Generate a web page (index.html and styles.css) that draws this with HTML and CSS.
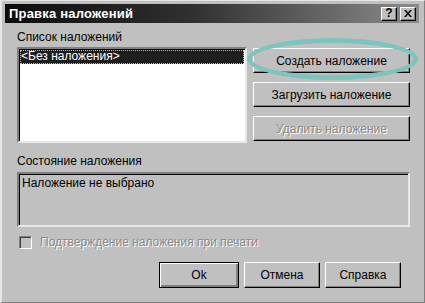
FILE: index.html
```html
<!DOCTYPE html>
<html lang="ru">
<head>
  <meta charset="UTF-8">
  <title>Правка наложений</title>
  <link rel="stylesheet" href="styles.css">
</head>
<body>
  <div class="window">
    <div class="titlebar">
      <span class="title">Правка наложений</span>
      <div class="caption-btns">
        <button class="cap">?</button>
        <button class="cap close">
          <svg width="8" height="7" viewBox="0 0 8 7"><path d="M0 0h2l2 2.5L6 0h2L5 3.5 8 7H6L4 4.5 2 7H0l3-3.5z" fill="#000"/></svg>
        </button>
      </div>
    </div>

    <div class="content">
      <div class="label">Список наложений</div>
      <div class="top-row">
        <div class="listbox">
          <div class="item selected">&lt;Без наложения&gt;</div>
        </div>
        <div class="side-btns">
          <div class="highlight-wrap">
            <button class="btn">Создать наложение</button>
            <div class="ring"></div>
          </div>
          <button class="btn">Загрузить наложение</button>
          <button class="btn" disabled>Удалить наложение</button>
        </div>
      </div>

      <div class="label status-label">Состояние наложения</div>
      <div class="status-box">Наложение не выбрано</div>

      <label class="check disabled">
        <span class="box"></span>
        <span>Подтверждение наложения при печати</span>
      </label>

      <div class="bottom-btns">
        <button class="btn small default">Ok</button>
        <button class="btn small">Отмена</button>
        <button class="btn small">Справка</button>
      </div>
    </div>
  </div>
</body>
</html>
```

FILE: styles.css
```css
* { box-sizing: border-box; }
body {
  margin: 0;
  background: #c0c0c0;
  font-family: 'Liberation Sans', Arial, sans-serif;
  font-size: 12px;
  color: #000;
}
.window {
  width: 425px;
  height: 303px;
  padding: 3px 5px 3px 3px;
  background: #c0c0c0;
  border-left: 2px solid #e6e6e6;
  border-top: 1px solid #e6e6e6;
  border-right: 1px solid #808080;
  border-bottom: 1px solid #808080;
}
.titlebar {
  height: 19px;
  display: flex;
  align-items: center;
  justify-content: space-between;
  padding: 0 3px 0 4px;
  background: linear-gradient(to right, #0c0c0c 0%, #303030 45%, #8c8c8c 100%);
}
.title {
  color: #fff;
  font-weight: bold;
  font-size: 13px;
  letter-spacing: 0.2px;
}
.caption-btns { display: flex; gap: 3px; }
.cap {
  width: 16px;
  height: 14px;
  padding: 0;
  background: #c0c0c0;
  border: 1px solid;
  border-color: #fff #000 #000 #fff;
  box-shadow: inset -1px -1px #808080;
  font-family: 'Liberation Sans', Arial, sans-serif;
  font-weight: bold;
  font-size: 12px;
  line-height: 11px;
  display: flex;
  align-items: center;
  justify-content: center;
}
.content {
  padding: 7px 9px 0 12px;
}
.label {
  line-height: 15px;
  height: 15px;
  margin-bottom: 2px;
}
.top-row {
  display: flex;
  gap: 6px;
}
.listbox {
  width: 230px;
  height: 96px;
  background: #fff;
  border: 2px solid;
  border-color: #808080 #e8e8e8 #e8e8e8 #808080;
  box-shadow: inset 1px 1px #000;
  padding: 1px 1px 1px 1px;
}
.item {
  height: 14px;
  line-height: 13px;
  padding-left: 1px;
}
.item.selected {
  background: #1e1e1e;
  color: #fff;
  outline: 1px dotted #bdbdbd;
  outline-offset: -1px;
}
.side-btns {
  display: flex;
  flex-direction: column;
  gap: 9px;
  padding-top: 1px;
}
.highlight-wrap { position: relative; }
.btn {
  width: 157px;
  height: 25px;
  padding: 0;
  background: #c0c0c0;
  border: 1px solid;
  border-color: #fff #000 #000 #fff;
  box-shadow: inset -1px -1px #808080;
  font-family: 'Liberation Sans', Arial, sans-serif;
  font-size: 12px;
  color: #000;
}
.btn:disabled {
  color: #8a8a8a;
  text-shadow: 1px 1px #fff;
}
.ring {
  position: absolute;
  left: -6px;
  top: -10px;
  width: 171px;
  height: 42px;
  border: 5px solid #7cc4be;
  border-radius: 50%;
  pointer-events: none;
}
.status-label { margin-top: 11px; margin-bottom: 3px; }
.status-box {
  width: 393px;
  height: 55px;
  border: 2px solid;
  border-color: #808080 #e8e8e8 #e8e8e8 #808080;
  box-shadow: inset 1px 1px #000;
  padding: 2px 3px;
  line-height: 14px;
}
.check {
  display: flex;
  align-items: center;
  gap: 8px;
  margin: 8px 0 0 2px;
  height: 14px;
}
.check .box {
  width: 13px;
  height: 13px;
  border: 1px solid;
  border-color: #808080 #fff #fff #808080;
  box-shadow: inset 1px 1px #404040;
  background: #c0c0c0;
}
.check.disabled span:last-child {
  color: #8a8a8a;
  text-shadow: 1px 1px #fff;
}
.bottom-btns {
  display: flex;
  justify-content: flex-end;
  gap: 5px;
  margin-top: 13px;
  padding-right: 9px;
}
.btn.small {
  width: 76px;
  height: 26px;
}
.btn.default {
  width: 80px;
  border: 1px solid #000;
  box-shadow: inset 1px 1px #fff, inset -2px -2px #808080;
}
```
